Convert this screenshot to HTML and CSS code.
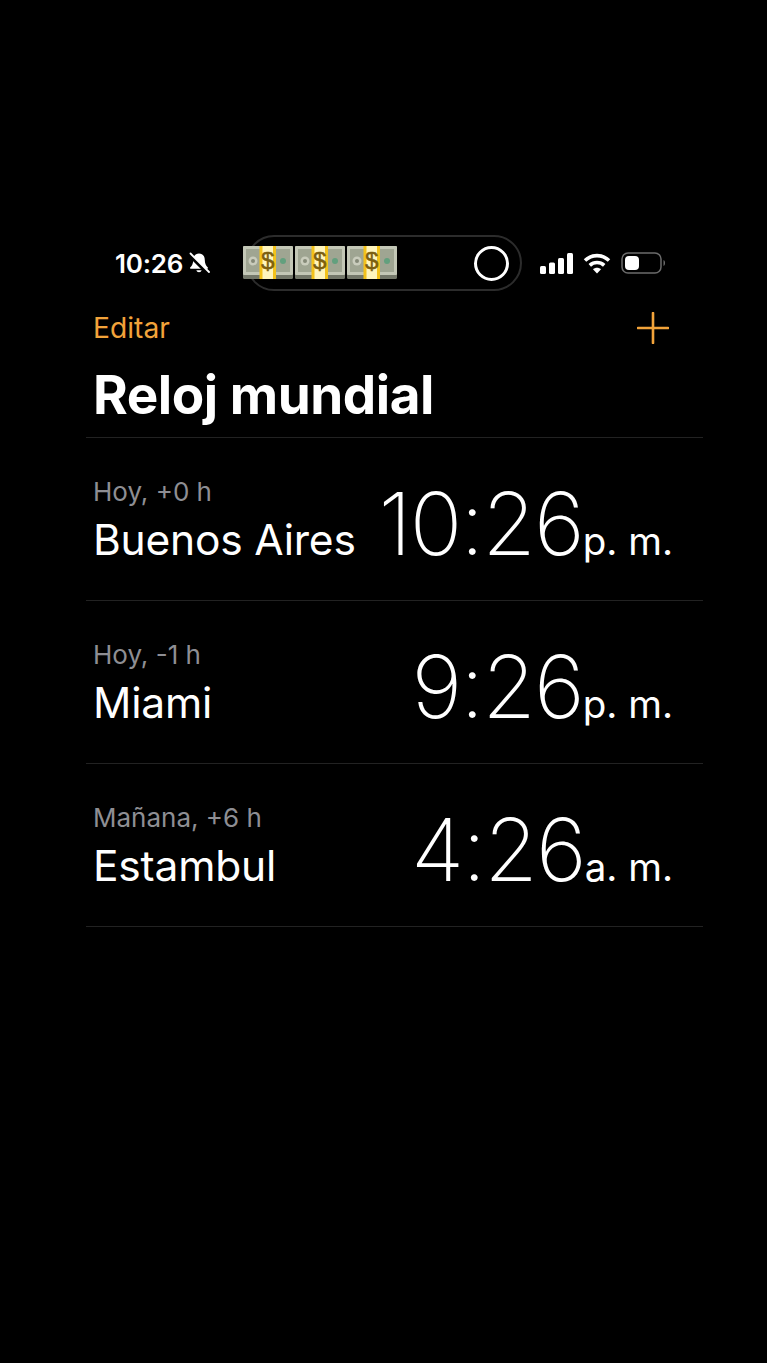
FILE: index.html
```html
<!DOCTYPE html>
<html lang="es">
<head>
    <meta charset="UTF-8">
    <meta name="viewport" content="width=device-width, initial-scale=1.0">
    <title>Reloj mundial</title>
    <link rel="stylesheet" href="styles.css">
</head>
<body>
    <div class="screen">
        <div class="status-bar">
            <div class="status-left">
                <span class="status-time">10:26</span>
                <svg class="bell" viewBox="0 0 22 22" width="22" height="22">
                    <path d="M11 1.500c-3.800 0-5.800 2.900-5.800 6.400 0 3.500-1 5.500-3 7.600-.5.600-.1 1.300.6 1.300h16.400c.7 0 1.100-.7.600-1.300-2-2.100-3-4.100-3-7.600 0-3.500-2-6.400-5.800-6.400z" fill="#fff"/>
                    <path d="M8.300 18.300a2.800 2.800 0 0 0 5.400 0z" fill="#fff"/>
                    <path d="M1.500 3 19.500 21" stroke="#000" stroke-width="3.600"/>
                    <path d="M2.500 1.500 21 20" stroke="#fff" stroke-width="1.800" stroke-linecap="round"/>
                </svg>
            </div>
            <div class="status-right">
                <svg viewBox="0 0 33 21" width="33" height="21">
                    <rect x="0" y="13" width="6" height="8" rx="1.500" fill="#fff"/>
                    <rect x="9" y="9.500" width="6" height="11.500" rx="1.500" fill="#fff"/>
                    <rect x="18" y="5" width="6" height="16" rx="1.500" fill="#fff"/>
                    <rect x="27" y="0" width="6" height="21" rx="1.500" fill="#fff"/>
                </svg>
                <svg viewBox="0 0 28 21" width="28" height="21" fill="none" stroke="#fff" stroke-width="3.600">
                    <path d="M2 7.500C9 1 19 1 26 7.500"/>
                    <path d="M6.800 12.300c4.200-3.800 10.200-3.800 14.400 0"/>
                    <path d="M14 20.500l-4-4.200c2.300-2 5.700-2 8 0z" fill="#fff" stroke="none"/>
                </svg>
                <svg viewBox="0 0 46 22" width="46" height="22">
                    <rect x="1" y="1" width="39" height="20" rx="6" fill="none" stroke="#6b6b6b" stroke-width="1.500"/>
                    <rect x="4" y="4" width="14" height="14" rx="4" fill="#fff"/>
                    <path d="M42.500 8c2 .5 2 5.500 0 6z" fill="#6b6b6b"/>
                </svg>
            </div>
            <div class="island">
                <div class="bills">
                    <svg class="bill" viewBox="0 0 50 33">
                        <rect x="0" y="0" width="50" height="33" rx="1.500" fill="#74786a"/>
                        <rect x="0" y="0" width="50" height="29" rx="1" fill="#c3c7b6"/>
                        <rect x="3" y="3" width="44" height="23" fill="#9fa592"/>
                        <circle cx="10" cy="15" r="4.500" fill="#c9ccbc"/>
                        <circle cx="10" cy="15" r="2" fill="#858a78"/>
                        <circle cx="40" cy="15" r="3" fill="#62a07e"/>
                        <rect x="16.500" y="0" width="16.500" height="33" fill="#f3c21b"/>
                        <rect x="19.500" y="0" width="10.500" height="33" fill="#fff5bd"/>
                        <text x="24.800" y="23" class="money-sign">$</text>
                    </svg>
                    <svg class="bill" viewBox="0 0 50 33">
                        <rect x="0" y="0" width="50" height="33" rx="1.500" fill="#74786a"/>
                        <rect x="0" y="0" width="50" height="29" rx="1" fill="#c3c7b6"/>
                        <rect x="3" y="3" width="44" height="23" fill="#9fa592"/>
                        <circle cx="10" cy="15" r="4.500" fill="#c9ccbc"/>
                        <circle cx="10" cy="15" r="2" fill="#858a78"/>
                        <circle cx="40" cy="15" r="3" fill="#62a07e"/>
                        <rect x="16.500" y="0" width="16.500" height="33" fill="#f3c21b"/>
                        <rect x="19.500" y="0" width="10.500" height="33" fill="#fff5bd"/>
                        <text x="24.800" y="23" class="money-sign">$</text>
                    </svg>
                    <svg class="bill" viewBox="0 0 50 33">
                        <rect x="0" y="0" width="50" height="33" rx="1.500" fill="#74786a"/>
                        <rect x="0" y="0" width="50" height="29" rx="1" fill="#c3c7b6"/>
                        <rect x="3" y="3" width="44" height="23" fill="#9fa592"/>
                        <circle cx="10" cy="15" r="4.500" fill="#c9ccbc"/>
                        <circle cx="10" cy="15" r="2" fill="#858a78"/>
                        <circle cx="40" cy="15" r="3" fill="#62a07e"/>
                        <rect x="16.500" y="0" width="16.500" height="33" fill="#f3c21b"/>
                        <rect x="19.500" y="0" width="10.500" height="33" fill="#fff5bd"/>
                        <text x="24.800" y="23" class="money-sign">$</text>
                    </svg>
                </div>
                <span class="record-ring"></span>
            </div>
        </div>

        <div class="toolbar">
            <span class="edit">Editar</span>
            <svg class="plus" viewBox="0 0 32 32" width="32" height="32">
                <path d="M16 1v30M1 16h30" stroke="#f2a33a" stroke-width="2.600" stroke-linecap="round"/>
            </svg>
        </div>
        <h1>Reloj mundial</h1>

        <div class="clock-list">
            <div class="clock-row">
                <div class="place">
                    <div class="offset">Hoy, +0 h</div>
                    <div class="city">Buenos Aires</div>
                </div>
                <div class="time"><span class="digits">10:26</span><span class="ampm">p. m.</span></div>
            </div>
            <div class="clock-row">
                <div class="place">
                    <div class="offset">Hoy, -1 h</div>
                    <div class="city">Miami</div>
                </div>
                <div class="time"><span class="digits">9:26</span><span class="ampm">p. m.</span></div>
            </div>
            <div class="clock-row">
                <div class="place">
                    <div class="offset">Mañana, +6 h</div>
                    <div class="city">Estambul</div>
                </div>
                <div class="time"><span class="digits">4:26</span><span class="ampm">a. m.</span></div>
            </div>
        </div>
    </div>
</body>
</html>
```

FILE: styles.css
```css
html, body { margin: 0; height: 100%; background: #000; }
body { font-family: Inter, "Liberation Sans", sans-serif; color: #fff; overflow: hidden; }
.money-sign { font-family: "Liberation Sans", sans-serif; font-size: 24px; font-weight: 400; fill: #7c5f10; stroke: #7c5f10; stroke-width: .5; text-anchor: middle; }

.screen { box-sizing: border-box; width: 617px; height: 1363px; margin-left: 86px; padding-top: 235px; }

.status-bar { position: relative; display: flex; justify-content: space-between; align-items: center; height: 56px; padding: 0 36px 0 29px; }
.status-left { display: flex; align-items: center; gap: 5px; }
.status-time { font-size: 26px; font-weight: 600; letter-spacing: -0.2px; }
.bell { display: block; }
.status-right { display: flex; align-items: center; gap: 10px; }
.status-right svg { display: block; }

.island { position: absolute; left: 160px; top: 0; box-sizing: border-box; width: 276px; height: 56px; border: 2px solid #2c2c2c; border-radius: 28px; }
.bills { position: absolute; left: -5px; top: 9px; display: flex; gap: 2px; }
.bill { display: block; width: 50px; height: 33px; }
.record-ring { position: absolute; right: 11px; top: 9px; box-sizing: border-box; width: 35px; height: 35px; border: 3px solid #fff; border-radius: 50%; }

.toolbar { display: flex; justify-content: space-between; align-items: center; height: 32px; margin-top: 21px; padding: 0 34px 0 7px; }
.edit { font-size: 28.2px; color: #f2a33a; }
.plus { display: block; }

h1 { margin: 21px 0 0; padding: 0 7px 12px; font-size: 53px; line-height: 60px; font-weight: 700; letter-spacing: -0.45px; border-bottom: 1px solid #222; }

.clock-row { display: flex; justify-content: space-between; align-items: flex-end; box-sizing: border-box; height: 163px; padding: 0 30px 0 7px; border-bottom: 1px solid #222; }
.place { padding-bottom: 35px; }
.offset { font-size: 26px; line-height: 32px; color: #8e8e93; }
.city { font-size: 42.5px; line-height: 50px; margin-top: 7px; letter-spacing: -0.2px; }
.time { display: flex; align-items: baseline; padding-bottom: 14px; line-height: 90px; }
.digits { font-size: 87px; font-weight: 200; letter-spacing: -2px; }
.ampm { font-size: 38.5px; font-weight: 400; }
```
